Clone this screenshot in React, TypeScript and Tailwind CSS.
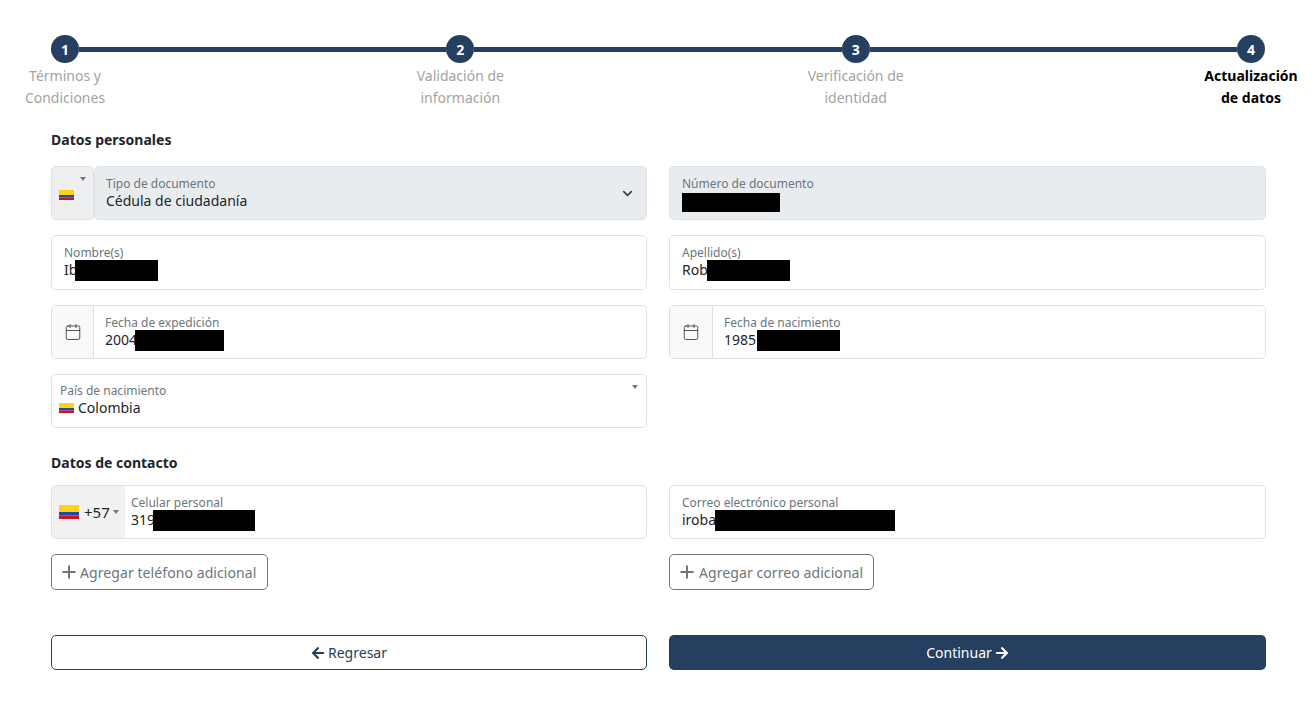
import { Calendar, ChevronDown, Plus } from 'lucide-react';
import { FaArrowLeft, FaArrowRight } from 'react-icons/fa';
import type { ReactNode } from 'react';

function Flag({ large }: { large?: boolean }) {
    return (
        <svg className={large ? "w-5 h-[14px] shrink-0" : "w-[15px] h-[10px] shrink-0"} viewBox="0 0 20 14" preserveAspectRatio="none">
            <rect width="20" height="7" fill="#fcd116" />
            <rect y="7" width="20" height="3.5" fill="#1f4aa8" />
            <rect y="10.5" width="20" height="3.5" fill="#ce1126" />
        </svg>
    );
}

function Caret() {
    return <span className="w-0 h-0 border-x-[3px] border-x-transparent border-t-[4px] border-t-[#777]"></span>;
}

function Step({ n, active, children }: { n: number; active?: boolean; children: ReactNode }) {
    return (
        <div className="w-7 shrink-0 flex flex-col items-center">
            <div className="w-7 h-7 shrink-0 rounded-full bg-[#243f60] text-white text-[14px] font-bold flex items-center justify-center">{n}</div>
            <div className={"w-max shrink-0 text-center text-[14px] leading-[22px] mt-[2px] " + (active ? "text-black font-bold" : "text-[#a3a3a3]")}>{children}</div>
        </div>
    );
}

function Line() {
    return <div className="flex-1 h-[5px] mt-[12px] bg-[#243f60]"></div>;
}

function Redacted({ w, h = "h-[21px]" }: { w: string; h?: string }) {
    return <span className={"inline-block bg-black translate-y-px " + h + " " + w}></span>;
}

function Value({ children }: { children: ReactNode }) {
    return <div className="flex items-center h-[21px] -mt-[2px] text-[14px] leading-[21px] text-[#212529] whitespace-nowrap">{children}</div>;
}

function Label({ children }: { children: ReactNode }) {
    return <div className="text-[12px] leading-[16px] text-[#6c757d] whitespace-nowrap">{children}</div>;
}

function Field({ label, children, h = "h-[54px]" }: { label: string; children: ReactNode; h?: string }) {
    return (
        <div className={"border border-[#dee2e6] rounded-[5px] bg-white pl-3 pt-[9px] " + h}>
            <Label>{label}</Label>
            <Value>{children}</Value>
        </div>
    );
}

function DateField({ label, year, w, iconBox = "w-[42px]" }: { label: string; year: string; w: string; iconBox?: string }) {
    return (
        <div className="flex h-[54px] border border-[#dee2e6] rounded-[5px] bg-white overflow-hidden">
            <div className={"shrink-0 bg-[#f8f9fa] border-r border-[#dee2e6] flex items-center justify-center " + iconBox}>
                <Calendar size={18} strokeWidth={1.2} className="text-[#444]" />
            </div>
            <div className="pl-[11px] pt-[9px]">
                <Label>{label}</Label>
                <Value>{year}<Redacted w={w} /></Value>
            </div>
        </div>
    );
}

export default function App() {
    return (
        <div className="h-[710px] bg-white pt-[35px] font-['Noto_Sans','Open_Sans',sans-serif] overflow-hidden">
            <div className="flex px-[51px]">
                <Step n={1}>Términos y<br />Condiciones</Step>
                <Line />
                <Step n={2}>Validación de<br />información</Step>
                <Line />
                <Step n={3}>Verificación de<br />identidad</Step>
                <Line />
                <Step n={4} active>Actualización<br />de datos</Step>
            </div>

            <div className="pl-[51px] pr-[50px]">
                <h2 className="text-[14px] leading-[20px] font-bold text-[#212529] mt-[21px]">Datos personales</h2>

                <div className="grid grid-cols-[596px_597px] gap-x-[22px] gap-y-[15px] mt-[16px]">
                    <div className="flex h-[54px]">
                        <div className="relative w-[43px] shrink-0 bg-[#eeeff0] border border-[#dee2e6] rounded-[5px] flex items-center pl-[7px] pt-[4px]">
                            <Flag />
                            <span className="absolute top-[10px] right-[7px] flex"><Caret /></span>
                        </div>
                        <div className="flex-1 flex items-center justify-between bg-[#e9ecef] border border-[#dee2e6] rounded-[5px] pl-[11px] pr-[11px]">
                            <div>
                                <Label>Tipo de documento</Label>
                                <Value>Cédula de ciudadanía</Value>
                            </div>
                            <ChevronDown size={15} strokeWidth={2.5} className="text-[#343a40]" />
                        </div>
                    </div>
                    <div className="h-[54px] bg-[#e9ecef] border border-[#dee2e6] rounded-[5px] pl-3 pt-[9px]">
                        <Label>Número de documento</Label>
                        <Value><Redacted w="w-[98px] mt-[2px]" h="h-[19px]" /></Value>
                    </div>

                    <Field label="Nombre(s)" h="h-[55px]">Ib<Redacted w="w-[83px] -ml-[2px]" /></Field>
                    <Field label="Apellido(s)" h="h-[55px]">Rob<Redacted w="w-[83px] -ml-px" /></Field>

                    <DateField label="Fecha de expedición" year="2004" w="w-[89px] -ml-[2px]" />
                    <DateField label="Fecha de nacimiento" year="1985" w="w-[83px] ml-px" iconBox="w-[43px]" />

                    <div className="relative h-[54px] border border-[#dee2e6] rounded-[5px] bg-white pl-2 pt-[8px]">
                        <Label>País de nacimiento</Label>
                        <div className="-mt-px">
                            <Value><span className="-ml-px flex"><Flag /></span><span className="ml-1">Colombia</span></Value>
                        </div>
                        <span className="absolute top-[10px] right-[8px] flex"><Caret /></span>
                    </div>
                    <div></div>
                </div>

                <h2 className="text-[14px] leading-[20px] font-bold text-[#212529] mt-[25px]">Datos de contacto</h2>

                <div className="grid grid-cols-[596px_597px] gap-x-[22px] mt-[12px]">
                    <div className="flex h-[54px] border border-[#dee2e6] rounded-[5px] bg-white overflow-hidden">
                        <div className="w-[73px] shrink-0 bg-[#f1f1f1] flex items-center pl-[7px] text-[15px] text-[#212529]">
                            <Flag large />
                            <span className="ml-[5px]">+57</span>
                            <span className="ml-[3px] flex"><Caret /></span>
                        </div>
                        <div className="pl-[6px] pt-[9px]">
                            <Label>Celular personal</Label>
                            <Value>319<Redacted w="w-[102px] -ml-[2px]" /></Value>
                        </div>
                    </div>
                    <Field label="Correo electrónico personal">iroba<Redacted w="w-[180px] -ml-px" /></Field>

                    <div className="mt-[15px]">
                        <button className="h-9 w-[217px] border border-[#6c757d] rounded-[5px] flex items-center pl-[7px] gap-px text-[14px] tracking-[0.08px] text-[#6c757d]">
                            <Plus size={20} strokeWidth={2.4} />Agregar teléfono adicional
                        </button>
                    </div>
                    <div className="mt-[15px]">
                        <button className="h-9 w-[205px] border border-[#6c757d] rounded-[5px] flex items-center pl-[7px] gap-[2px] text-[14px] tracking-[0.08px] text-[#6c757d]">
                            <Plus size={20} strokeWidth={2.4} />Agregar correo adicional
                        </button>
                    </div>
                </div>

                <div className="grid grid-cols-[596px_597px] gap-x-[22px] mt-[45px]">
                    <button className="h-[35px] border border-[#243f60] rounded-[5px] bg-white text-[#243f60] text-[14px] flex items-center justify-center gap-[3px]">
                        <FaArrowLeft size={14} />Regresar
                    </button>
                    <button className="h-[35px] rounded-[5px] bg-[#243f60] text-white text-[14px] flex items-center justify-center gap-[3px]">
                        Continuar<FaArrowRight size={14} />
                    </button>
                </div>
            </div>
        </div>
    );
}
